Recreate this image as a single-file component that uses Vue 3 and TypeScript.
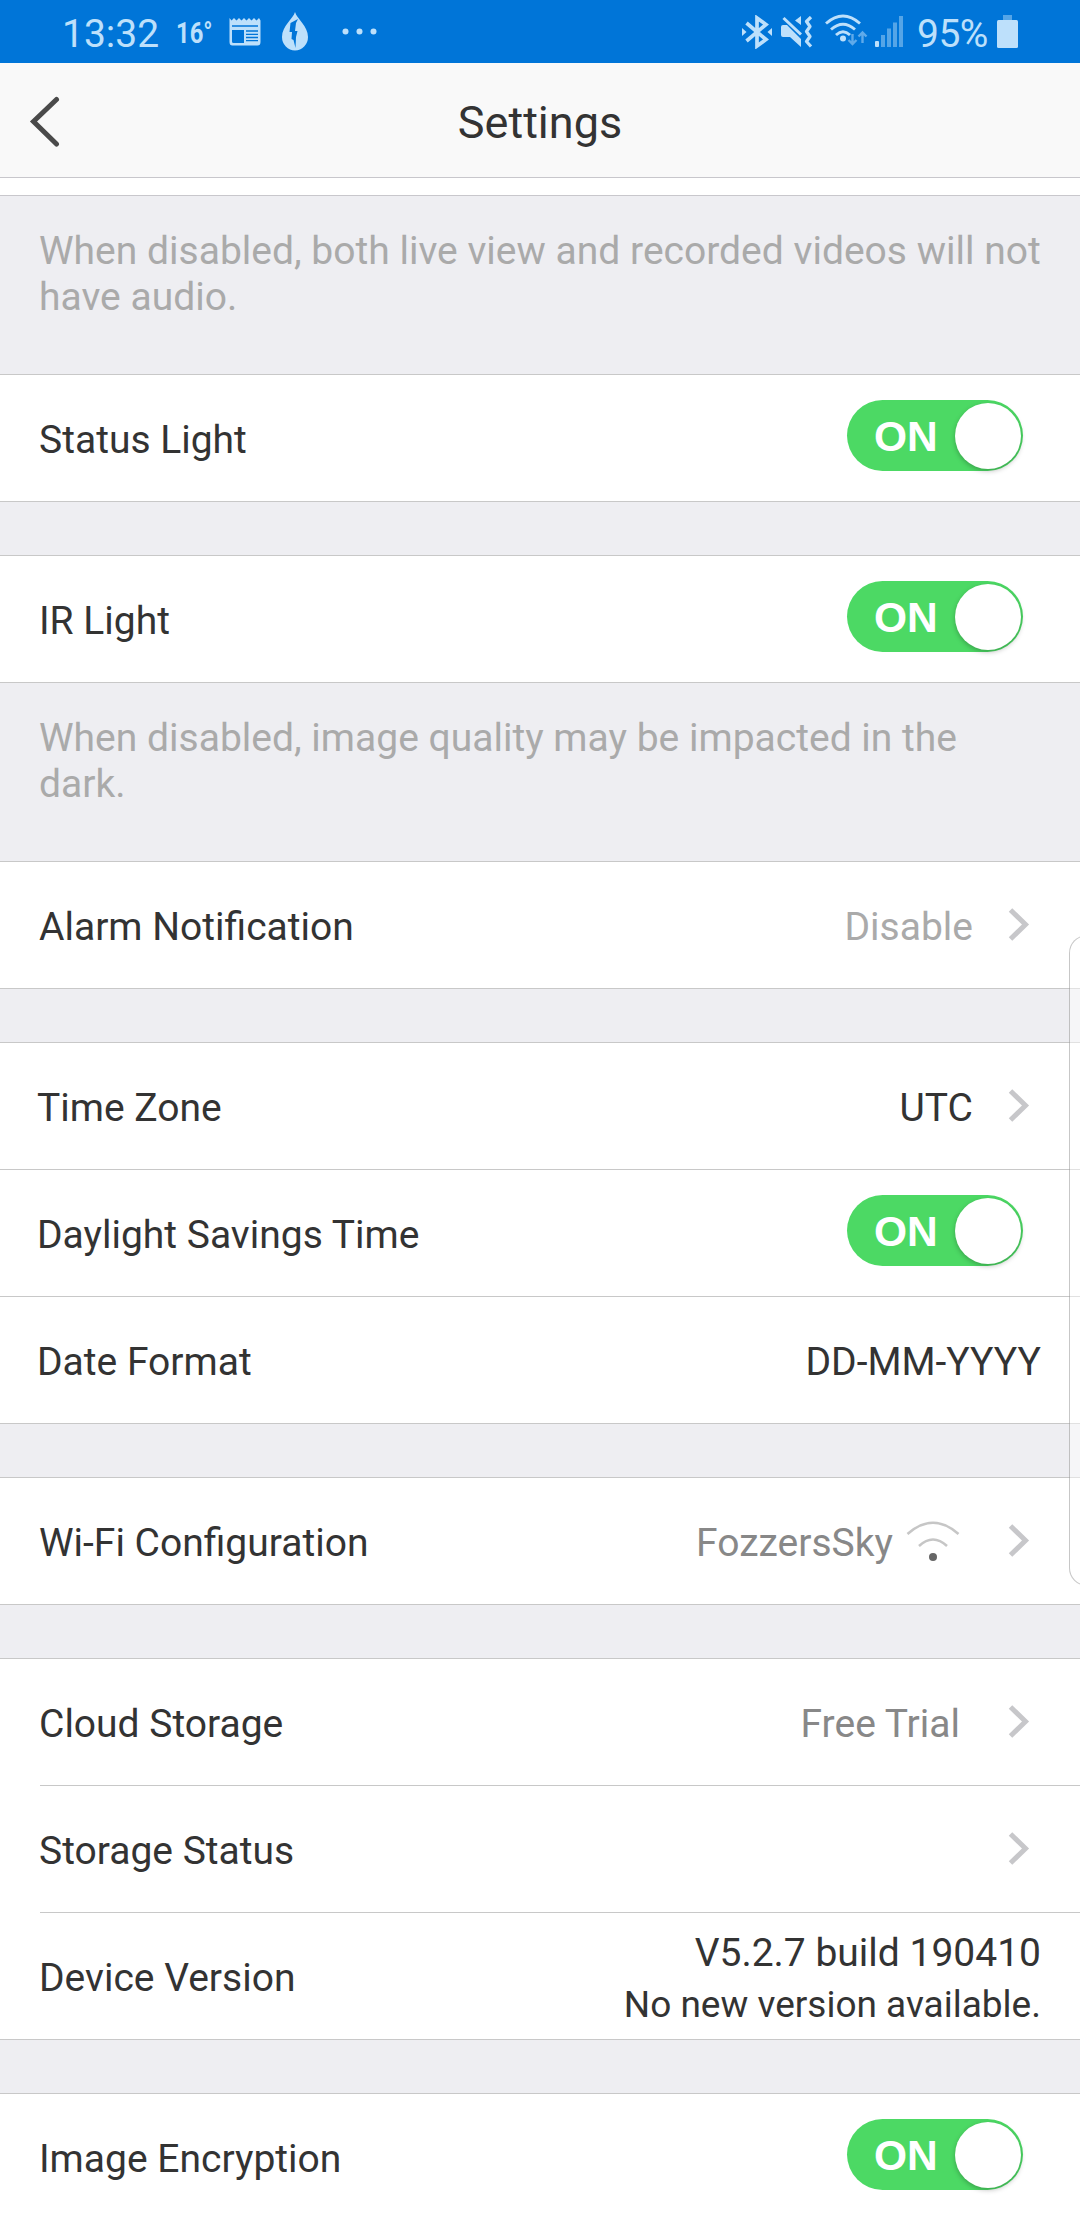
<script setup lang="ts">
interface Row {
  label: string
  toggle?: boolean
  value?: string
  tone?: 'light' | 'mid'
  chevron?: boolean
  wifi?: boolean
  version?: string[]
}

interface Section {
  rows: Row[]
  kind?: 'inset' | 'tight'
  note?: string[]
}

const sections: Section[] = [
  {
    rows: [],
    note: ['When disabled, both live view and recorded videos will not', 'have audio.'],
  },
  { rows: [{ label: 'Status Light', toggle: true }] },
  {
    rows: [{ label: 'IR Light', toggle: true }],
    note: ['When disabled, image quality may be impacted in the', 'dark.'],
  },
  { rows: [{ label: 'Alarm Notification', value: 'Disable', tone: 'light', chevron: true }] },
  {
    kind: 'tight',
    rows: [
      { label: 'Time Zone', value: 'UTC', chevron: true },
      { label: 'Daylight Savings Time', toggle: true },
      { label: 'Date Format', value: 'DD-MM-YYYY' },
    ],
  },
  { rows: [{ label: 'Wi-Fi Configuration', value: 'FozzersSky', tone: 'mid', wifi: true, chevron: true }] },
  {
    kind: 'inset',
    rows: [
      { label: 'Cloud Storage', value: 'Free Trial', tone: 'mid', chevron: true },
      { label: 'Storage Status', chevron: true },
      { label: 'Device Version', version: ['V5.2.7 build 190410', 'No new version available.'] },
    ],
  },
  { rows: [{ label: 'Image Encryption', toggle: true }] },
]
</script>

<template>
  <div class="screen">
    <div class="status">
      <span class="clock">13:32</span>
      <span class="temp">16°</span>
      <svg class="news" width="32" height="30" viewBox="0 0 32 30">
        <path fill="currentColor" fill-rule="evenodd" d="M.5 1l2 2.500L5 1l2.500 2.500L10 1l2.500 2.500L15 1l2.500 2.500L20 1l2.500 2.500L25 1l2.500 2.500L30 1l1.500 2.500V25q0 3.500-3 3.500h-25q-3 0-3-3.500zM3 8.300v1.500h26V8.300zM3 13v11.500q0 1.500 1.500 1.500H15V13z" />
        <path stroke="#0075d8" stroke-width="1.300" d="M17 14h12M17 17.300h12M17 20.500h12M17 23.700h12" />
      </svg>
      <svg class="drop" width="28" height="39" viewBox="0 0 28 39">
        <path fill="currentColor" d="M14 0c2 7 13 14 13 25a13 13.500 0 0 1-26 0C1 14 12 7 14 0z" />
        <path fill="#0075d8" d="M17 7l-7.500 4-1 9h2.500l-.5 7 2 1 2 8 .5-11 1.500-6h-2.500l1-8z" />
      </svg>
      <svg class="dots" width="35" height="7" viewBox="0 0 35 7">
        <g fill="currentColor"><circle cx="3.500" cy="3.500" r="3" /><circle cx="17.500" cy="3.500" r="3" /><circle cx="31.500" cy="3.500" r="3" /></g>
      </svg>
      <span class="spacer"></span>
      <svg class="bt" width="30" height="34" viewBox="0 0 30 34">
        <path fill="none" stroke="currentColor" stroke-width="3.700" d="M4.500 8L24 24.500l-9 6.500V3l9 6.500L4.500 26" />
        <path fill="currentColor" d="M0 13l4.500 4L0 21zM30 13l-4.500 4 4.500 4z" />
      </svg>
      <svg class="mute" width="32" height="32" viewBox="0 0 32 32">
        <path fill="currentColor" d="M0 11q0-2 2-2h4l14 14v8L9 21H2q-2 0-2-2zM20 0v9l-6-4.500z" />
        <path fill="none" stroke="currentColor" stroke-width="3" d="M2.500 2L20 18.500" />
        <path fill="none" stroke="currentColor" stroke-width="3.200" stroke-linejoin="round" d="M30 1l-4.500 4.500 3.500 5-3.500 5 3.500 5-3.500 5L30 30.500" />
      </svg>
      <svg class="wifi-s" width="43" height="32" viewBox="0 0 43 32">
        <g fill="none" stroke="currentColor" stroke-width="2.900"><path d="M1 9.500Q18 -5.500 35 9.500" /><path d="M6 15.500Q18 5 30 15.500" /><path d="M11 21Q18 14.500 25 21" /></g>
        <circle cx="18" cy="24.500" r="3" fill="currentColor" />
        <g fill="none" stroke="currentColor" stroke-width="2.400" opacity=".5"><path d="M27.500 20v10M23.500 26l4 4 4-4M37.500 29V18M33.500 22.500l4-4 4 4" /></g>
      </svg>
      <svg class="bars" width="28" height="31" viewBox="0 0 28 31">
        <rect x="0" y="25" width="4" height="6" rx="1" fill="currentColor" />
        <g fill="currentColor" opacity=".45"><rect x="6" y="19" width="4" height="12" /><rect x="12" y="12.500" width="4" height="18.500" /><rect x="18" y="6.500" width="4" height="24.500" /><rect x="24" y="0" width="4" height="31" /></g>
      </svg>
      <span class="percent">95%</span>
      <svg class="battery" width="21" height="33" viewBox="0 0 21 33">
        <rect x="6" y="0" width="9" height="5" fill="currentColor" opacity=".45" />
        <rect y="5" width="21" height="28" rx="1.500" fill="currentColor" />
      </svg>
    </div>

    <header class="bar">
      <svg class="back" width="32" height="52" viewBox="0 0 32 52">
        <path fill="none" stroke="#4a4a4a" stroke-width="5" stroke-linecap="round" d="M27.500 4.500L4.500 26.500l23 22.500" />
      </svg>
      <h1>Settings</h1>
    </header>
    <div class="sliver"></div>

    <template v-for="(s, i) in sections" :key="i">
      <section v-if="s.rows.length" class="group" :class="s.kind">
        <div v-for="r in s.rows" :key="r.label" class="row">
          <span class="label">{{ r.label }}</span>
          <span v-if="r.toggle" class="toggle"><span class="on">ON</span><span class="knob"></span></span>
          <span v-if="r.value" class="value" :class="[r.tone, { plain: !r.chevron, trial: s.kind === 'inset' }]">{{ r.value }}</span>
          <svg v-if="r.wifi" class="wifi" width="54" height="42" viewBox="0 0 54 42">
            <g fill="none" stroke="#c6c6c6" stroke-width="2.500"><path d="M1.500 14Q27 -8.500 52.500 14" /><path d="M13 26Q27 13 41 26" /></g>
            <circle cx="27" cy="37" r="4" fill="#666" />
          </svg>
          <svg v-if="r.chevron" class="chevron" width="22" height="34" viewBox="0 0 22 34">
            <path fill="none" stroke="#c7c7ca" stroke-width="5" d="M2.500 2L17.500 16.500 2.500 31" />
          </svg>
          <span v-if="r.version" class="version">
            <span>{{ r.version[0] }}</span>
            <span class="small">{{ r.version[1] }}</span>
          </span>
        </div>
      </section>
      <p v-if="s.note" class="note"><span v-for="n in s.note" :key="n">{{ n }}</span></p>
      <div v-else-if="i < sections.length - 1" class="gap"></div>
    </template>

    <div class="edge"></div>
  </div>
</template>

<style>
body {
  margin: 0;
  background: #fff;
}
</style>

<style scoped>
.screen {
  position: relative;
  width: 1080px;
  height: 2220px;
  overflow: hidden;
  background: #fff;
  color: #333;
  font-family: Roboto, "Liberation Sans", sans-serif;
  font-size: 39px;
}
.status {
  display: flex;
  align-items: flex-start;
  height: 63px;
  box-sizing: border-box;
  padding: 0 62px 0 62px;
  background: #0075d8;
  color: #bde0fb;
  line-height: 46px;
}
.status svg { flex: none; }
.clock {
  width: 98px;
  margin-top: 11px;
  font-size: 39px;
}
.temp {
  width: 50px;
  margin: 10px 0 0 16px;
  font-size: 29px;
  font-weight: 700;
  transform: scaleX(0.82);
  transform-origin: 0 50%;
}
.news { margin: 17px 0 0 3px; }
.drop { margin: 12px 0 0 20px; }
.dots { margin: 28px 0 0 33px; }
.spacer { flex: 1; }
.bt { margin-top: 15px; }
.mute { margin: 16px 0 0 9px; }
.wifi-s { margin: 14px 0 0 12px; }
.bars { margin: 16px 0 0 7px; }
.percent {
  width: 72px;
  margin: 11px 0 0 14px;
  font-size: 39px;
  letter-spacing: -0.5px;
}
.battery { margin: 15px 0 0 8px; }

.bar {
  display: grid;
  grid-template-columns: 110px 1fr 110px;
  align-items: center;
  height: 114px;
  background: #f9f9f9;
  border-bottom: 1px solid #c8c7cc;
}
.back { margin-left: 29px; margin-top: 2px; }
h1 {
  margin: 4px 0 0;
  font-size: 45px;
  font-weight: 400;
  text-align: center;
}
.sliver {
  height: 17px;
  border-bottom: 1px solid #c8c7cc;
}
.note {
  display: flex;
  flex-direction: column;
  height: 178px;
  margin: 0;
  padding: 32px 0 0 39px;
  box-sizing: border-box;
  background: #eeeef2;
  color: #aaa;
  line-height: 46px;
  letter-spacing: 0.01px;
  white-space: nowrap;
}
.gap {
  height: 53px;
  background: #eeeef2;
}
.group { border-top: 1px solid #c8c8c8; }
.row {
  display: flex;
  align-items: center;
  height: 126px;
  padding-left: 39px;
  border-bottom: 1px solid #c8c8c8;
}
.tight .row { padding-left: 37px; }
.inset .row:not(:last-child) {
  border-bottom: 0;
  height: 127px;
  background: linear-gradient(#c8c8c8, #c8c8c8) 40px 100% / 100% 1px no-repeat;
}
.inset .row:not(:last-child) > * { margin-bottom: 1px; }
.label {
  flex: 1;
  padding-top: 3px;
}
.value {
  padding-top: 3px;
  margin-right: 35px;
}
.value.plain { margin-right: 39px; }
.value.trial { margin-right: 48px; }
.light { color: #aaa; }
.mid { color: #888; }
.chevron {
  flex: none;
  margin-right: 50px;
}
.wifi {
  margin: 0 48px 0 -22px;
}
.toggle {
  display: flex;
  align-items: center;
  justify-content: space-between;
  box-sizing: border-box;
  width: 176px;
  height: 71px;
  margin: 0 57px 5px 0;
  padding: 0 2px 0 27px;
  border-radius: 36px;
  background: #4cd964;
}
.on {
  padding-top: 2px;
  color: #fff;
  font: 700 42.500px/71px "Liberation Sans", Arial, sans-serif;
}
.knob {
  width: 66px;
  height: 66px;
  border-radius: 50%;
  background: #fff;
  box-shadow: 0 2px 5px rgba(0, 0, 0, 0.25);
}
.version {
  display: flex;
  flex-direction: column;
  align-items: flex-end;
  margin-right: 39px;
  padding-top: 5px;
  line-height: 51px;
}
.small { font-size: 37px; }
.edge {
  position: absolute;
  top: 935px;
  left: 1069px;
  width: 40px;
  height: 649px;
  border: 1px solid rgba(0, 0, 0, 0.22);
  border-radius: 18px;
  background: rgba(255, 255, 255, 0.45);
}
</style>
